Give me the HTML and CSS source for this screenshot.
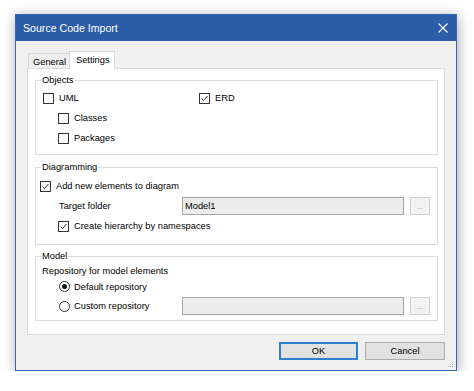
FILE: index.html
```html
<!DOCTYPE html>
<html>
<head>
<meta charset="utf-8">
<link rel="stylesheet" href="styles.css">
</head>
<body>
<div class="stage">
  <div class="window">
    <div class="titlebar">
      <span class="title">Source Code Import</span>
      <svg class="close" width="10" height="10" viewBox="0 0 10 10"><path d="M0.5 0.5 L9.5 9.5 M9.5 0.5 L0.5 9.5" stroke="#fff" stroke-width="1.2" fill="none"/></svg>
    </div>
    <div class="content">
      <div class="tabs">
        <div class="tab tab-general">General</div>
        <div class="tab tab-active">Settings</div>
      </div>
      <div class="panel">
        <fieldset class="group g-objects">
          <legend>Objects</legend>
          <div class="row row-top">
            <label class="check c-uml"><span class="box"></span>UML</label>
            <label class="check"><span class="box"><svg width="9" height="9" viewBox="0 0 9 9"><path d="M1.5 4.5 L3.5 6.5 L7.5 2" stroke="#333" stroke-width="1" fill="none"/></svg></span>ERD</label>
          </div>
          <div class="row"><label class="check c-sub"><span class="box"></span>Classes</label></div>
          <div class="row"><label class="check c-sub"><span class="box"></span>Packages</label></div>
        </fieldset>
        <fieldset class="group g-diag">
          <legend>Diagramming</legend>
          <div class="row"><label class="check c-add"><span class="box"><svg width="9" height="9" viewBox="0 0 9 9"><path d="M1.5 4.5 L3.5 6.5 L7.5 2" stroke="#333" stroke-width="1" fill="none"/></svg></span>Add new elements to diagram</label></div>
          <div class="row">
            <span class="field-label">Target folder</span>
            <div class="textbox">Model1</div>
            <div class="browse">...</div>
          </div>
          <div class="row"><label class="check c-sub"><span class="box"><svg width="9" height="9" viewBox="0 0 9 9"><path d="M1.5 4.5 L3.5 6.5 L7.5 2" stroke="#333" stroke-width="1" fill="none"/></svg></span>Create hierarchy by namespaces</label></div>
        </fieldset>
        <fieldset class="group g-model">
          <legend>Model</legend>
          <div class="repo-label">Repository for model elements</div>
          <div class="row row-r1"><label class="radio"><span class="dot dot-on"></span>Default repository</label></div>
          <div class="row row-r2">
            <label class="radio radio-custom"><span class="dot"></span>Custom repository</label>
            <div class="textbox"></div>
            <div class="browse">...</div>
          </div>
        </fieldset>
      </div>
      <div class="buttons">
        <div class="btn btn-ok">OK</div>
        <div class="btn">Cancel</div>
      </div>
    </div>
    <svg class="grip" width="7" height="7" viewBox="0 0 7 7">
      <rect x="5" y="1" width="1" height="1" fill="#b0b0b0"/>
      <rect x="3" y="3" width="1" height="1" fill="#b0b0b0"/>
      <rect x="5" y="3" width="1" height="1" fill="#b0b0b0"/>
      <rect x="1" y="5" width="1" height="1" fill="#b0b0b0"/>
      <rect x="3" y="5" width="1" height="1" fill="#b0b0b0"/>
      <rect x="5" y="5" width="1" height="1" fill="#b0b0b0"/>
    </svg>
  </div>
</div>
</body>
</html>
```
FILE: styles.css
```css
html, body {
  margin: 0;
  background: #ffffff;
}
body {
  font-family: "Liberation Sans", Arial, sans-serif;
  font-size: 9.3px;
  color: #000;
}
.stage {
  padding: 14px 0 0 15px;
}
.window {
  position: relative;
  width: 442px;
  height: 357px;
  box-sizing: border-box;
  border: 1px solid #3566b0;
  background: #f0f0f0;
  box-shadow: 1px 2px 12px rgba(0, 0, 0, 0.35);
  display: flex;
  flex-direction: column;
}
.titlebar {
  height: 26px;
  flex: none;
  background: #2b5ca8;
  color: #fff;
  display: flex;
  align-items: center;
  justify-content: space-between;
  padding: 0 8px 0 7px;
}
.title {
  font-size: 10.6px;
}
.close {
  display: block;
}
.content {
  padding: 10px 11px 10px 11px;
  display: flex;
  flex-direction: column;
}
.tabs {
  height: 17px;
  display: flex;
  align-items: flex-end;
  padding-left: 1px;
}
.tab {
  box-sizing: border-box;
  border: 1px solid #d9d9d9;
  border-bottom: none;
  display: flex;
  align-items: center;
}
.tab-general {
  width: 41px;
  height: 15px;
  padding-left: 4px;
  padding-top: 1px;
  background: #f0f0f0;
  border-right: none;
}
.tab-active {
  position: relative;
  width: 46px;
  height: 18px;
  margin-bottom: -1px;
  padding-left: 6px;
  padding-bottom: 2px;
  background: #fff;
}
.panel {
  height: 267px;
  box-sizing: border-box;
  border: 1px solid #dadada;
  background: #fff;
  padding: 6px 6px 13px 7px;
  display: flex;
  flex-direction: column;
}
.group {
  margin: 0;
  border: 1px solid #dcdcdc;
  padding: 2px 6px 6px 5px;
  min-width: 0;
}
.group legend {
  padding: 0 1px;
  line-height: 11px;
}
.g-diag {
  margin-top: 7px;
  padding-top: 3px;
  padding-bottom: 8px;
}
.g-model {
  margin-top: 6px;
  padding-top: 3px;
  padding-bottom: 4px;
}
.row {
  height: 20px;
  display: flex;
  align-items: center;
}
.check, .radio {
  display: flex;
  align-items: center;
  gap: 5px;
}
.box {
  width: 11px;
  height: 11px;
  box-sizing: border-box;
  border: 1px solid #333;
  background: #fff;
  display: flex;
  align-items: center;
  justify-content: center;
}
.box svg {
  display: block;
}
.c-uml {
  margin-left: 2px;
  width: 156px;
}
.c-sub {
  margin-left: 17px;
}
.c-add {
  margin-left: -1px;
}
.field-label {
  margin-left: 18px;
  width: 123px;
}
.textbox {
  width: 222px;
  height: 18px;
  box-sizing: border-box;
  border: 1px solid #a6a6a6;
  background: #ececec;
  padding-left: 2px;
  display: flex;
  align-items: center;
}
.browse {
  margin-left: 6px;
  width: 20px;
  height: 18px;
  box-sizing: border-box;
  border: 1px solid #d0d0d0;
  background: #f2f2f2;
  color: #8a8a8a;
  font-size: 8px;
  display: flex;
  align-items: flex-end;
  justify-content: center;
  padding-bottom: 3px;
}
.repo-label {
  margin-left: 1px;
  height: 12px;
  line-height: 12px;
}
.row-r1 {
  height: 19px;
}
.radio {
  margin-left: 18px;
  gap: 4px;
}
.radio-custom {
  width: 123px;
}
.dot {
  width: 11px;
  height: 11px;
  box-sizing: border-box;
  border: 1px solid #333;
  border-radius: 50%;
  background: #fff;
  display: flex;
  align-items: center;
  justify-content: center;
}
.dot-on::after {
  content: "";
  width: 5px;
  height: 5px;
  border-radius: 50%;
  background: #111;
}
.buttons {
  margin-top: 7px;
  display: flex;
  justify-content: flex-end;
  gap: 7px;
}
.btn {
  width: 80px;
  height: 18px;
  box-sizing: border-box;
  border: 1px solid #adadad;
  background: #e1e1e1;
  display: flex;
  align-items: center;
  justify-content: center;
}
.btn-ok {
  width: 79px;
  border: 2px solid #2f7fd0;
}
.grip {
  position: absolute;
  right: 2px;
  bottom: 2px;
}
```
